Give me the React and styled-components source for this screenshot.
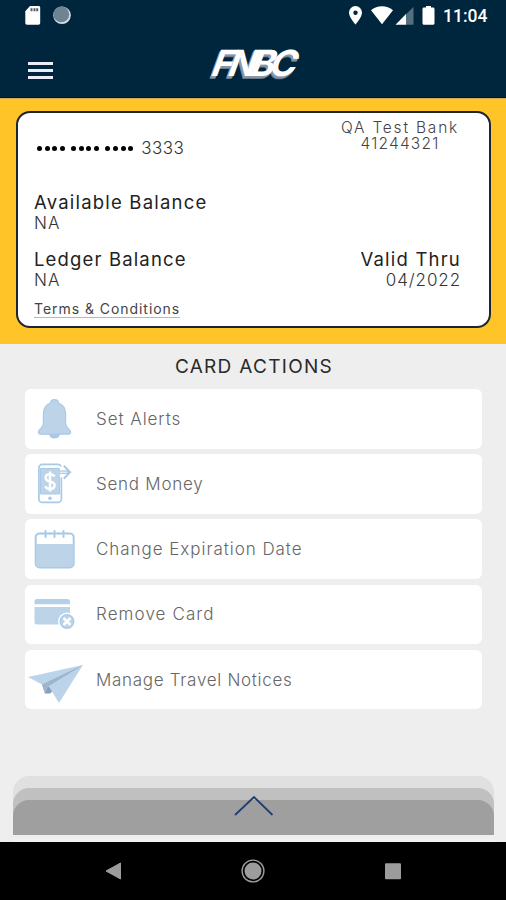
import React from 'react';
import styled, { createGlobalStyle } from 'styled-components';

const actions = [
  { label: 'Set Alerts', icon: 'bell', spacing: 0.95 },
  { label: 'Send Money', icon: 'phone', spacing: 0.75 },
  { label: 'Change Expiration Date', icon: 'calendar', spacing: 0.95 },
  { label: 'Remove Card', icon: 'card', spacing: 1.1 },
  { label: 'Manage Travel Notices', icon: 'plane', spacing: 0.7 },
];

const ActionIcon = ({ name }) => {
  switch (name) {
    case 'bell':
      return (
        <svg width="60" height="59" viewBox="0 0 60 59">
          <path fill="#a9c9e8" d="M24 45h11c-.5 3-2.500 4.500-5.500 4.500S24.500 48 24 45Z" />
          <path fill="#bcd3e8" stroke="#a9c9e8" strokeWidth="1.200" strokeLinejoin="round" d="M29.500 10.600c2.300 0 3.900 1.400 4 3.400 4.800 1.800 7.100 5.800 7.100 11v8.500c0 3.200 1 4.900 4 7.500 1.600 1.500 1.400 4.200-1 4.200H15.400c-2.400 0-2.600-2.700-1-4.200 3-2.600 4-4.300 4-7.500V25c0-5.200 2.300-9.200 7.100-11 .1-2 1.700-3.400 4-3.400Z" />
        </svg>
      );
    case 'phone':
      return (
        <svg width="60" height="59" viewBox="0 0 60 59">
          <rect x="13.900" y="10.400" width="22.500" height="38" rx="3.500" fill="#fff" stroke="#a9c9e8" strokeWidth="1.700" />
          <path fill="#bcd3e8" stroke="#a9c9e8" d="M15.500 14.500h19v25.500h-19z" />
          <circle cx="25" cy="44.200" r="1.800" fill="#a9c9e8" />
          <path fill="none" stroke="#fff" strokeWidth="2.500" d="M29.500 22.500c-.8-1.500-2.600-2.300-4.500-2.300-2.700 0-4.400 1.500-4.400 3.500 0 5.200 9 2.400 9 7.600 0 2.300-1.900 3.700-4.600 3.700-2.300 0-4-.9-4.800-2.700M25 17.500v20" />
          <path fill="#fff" d="M34.800 12.500h4v11h-4z" />
          <path fill="none" stroke="#a9c9e8" strokeWidth="3.600" d="M35 18.200h8.500" />
          <path fill="none" stroke="#a9c9e8" strokeWidth="2" d="m38.800 11.700 6.300 6.500-6.300 6.500" />
          <path stroke="#fff" strokeWidth="1" d="M35 18.200h7" />
        </svg>
      );
    case 'calendar':
      return (
        <svg width="60" height="59" viewBox="0 0 60 59">
          <rect x="10.700" y="13.400" width="38" height="34" rx="4" fill="#fff" stroke="#a9c9e8" strokeWidth="2" />
          <path fill="#bcd3e8" d="M11 24h37.500v19.500a3.500 3.500 0 0 1-3.500 3.500H14.500a3.500 3.500 0 0 1-3.500-3.500z" />
          <path stroke="#fff" strokeWidth="6" d="M20.500 11v6M29.500 11v6M38.500 11v6" />
          <path stroke="#a9c9e8" strokeWidth="2" strokeLinecap="round" d="M20.500 11v6M29.500 11v6M38.500 11v6M17 13.400h7M26 13.400h7M35 13.400h7" />
        </svg>
      );
    case 'card':
      return (
        <svg width="60" height="59" viewBox="0 0 60 59">
          <path fill="#b4d0e9" d="M12 14h30.500a2.500 2.500 0 0 1 2.500 2.500v2.800H9.500v-2.800A2.500 2.500 0 0 1 12 14Z" />
          <path fill="#bcd3e8" d="M9.500 22H45v14.900a2.500 2.500 0 0 1-2.500 2.500H12a2.500 2.500 0 0 1-2.500-2.500z" />
          <circle cx="42" cy="36.500" r="9" fill="#fff" />
          <circle cx="42" cy="36.500" r="6.800" fill="#bcd3e8" stroke="#a9c9e8" strokeWidth="1.300" />
          <path stroke="#fff" strokeWidth="2.600" d="m38.500 33 7 7m0-7-7 7" />
        </svg>
      );
    default:
      return (
        <svg width="60" height="59" viewBox="0 0 60 59">
          <path fill="#bcd4e9" d="M3 27 57.800 15 17 34.500Z" />
          <path fill="#9db6cd" d="M17 34.500 57.800 15 30.500 39 20 43.500Z" />
          <path fill="#859fb8" d="m20 43.500 3-7 5.500 4-3.500 3Z" />
          <path fill="#bcd4e9" d="M57.800 15 34 53 23.500 36Z" />
          <path fill="#9db6cd" d="M17 34.500 57.800 15 23.500 36 20 43.500Z" />
        </svg>
      );
  }
};

const App = () => (
  <>
    <GlobalStyle />
    <Screen>
      <Header>
        <StatusBar>
          <svg width="80" height="32" viewBox="0 0 80 32">
            <path fill="#fff" d="M30 6h8.500c1 0 1.700.7 1.700 1.700v15.400c0 1-.7 1.700-1.700 1.700H27c-1 0-1.700-.7-1.700-1.700V11.200Z" />
            <path stroke="#555f6b" strokeWidth="2" d="M31.500 8.200v3M34.500 8.200v3M37.200 8.200v3" />
            <circle cx="62" cy="15.300" r="8.800" fill="#d5dee4" />
            <circle cx="61.300" cy="14.400" r="7.900" fill="#6f8492" />
          </svg>
          <StatusRight>
            <svg width="96" height="32" viewBox="345 0 96 32">
              <path fill="#fff" fillRule="evenodd" d="M355.500 6a6.500 6.500 0 0 0-6.500 6.500c0 4.800 6.500 12 6.500 12s6.500-7.200 6.500-12a6.500 6.500 0 0 0-6.500-6.500Zm0 4.500a2.200 2.200 0 1 1 0 4.400 2.200 2.200 0 0 1 0-4.400Z" />
              <path fill="#fff" d="M371 10.200a17.500 17.500 0 0 1 22 0L382 24.300Z" />
              <path fill="#fff" d="M395.500 24.800 406 14v10.800Z" />
              <path fill="#536f80" d="M406 14.200 413.500 7v17.800H406Z" />
              <path fill="#fff" d="M426 6h5v1.500h2c.8 0 1.500.7 1.500 1.500v14.300c0 .8-.7 1.500-1.500 1.500h-9c-.8 0-1.500-.7-1.500-1.500V9c0-.8.7-1.500 1.500-1.500h2Z" />
            </svg>
            <Clock>11:04</Clock>
          </StatusRight>
        </StatusBar>
        <TitleBar>
          <MenuButton aria-label="Menu">
            <span />
            <span />
            <span />
          </MenuButton>
          <Logo>FNBC</Logo>
          <div />
        </TitleBar>
      </Header>

      <CardBand>
        <Card>
          <CardTop>
            <CardNumber>
              {[0, 1, 2].map((group) => (
                <DotGroup key={group}>
                  <i />
                  <i />
                  <i />
                  <i />
                </DotGroup>
              ))}
              <Value $spacing={0.5}>3333</Value>
            </CardNumber>
            <Bank>
              <BankLine $spacing={1.8}>QA Test Bank</BankLine>
              <BankLine $spacing={1.2}>41244321</BankLine>
            </Bank>
          </CardTop>
          <Balance>
            <Label $spacing={1.2}>Available Balance</Label>
            <Value>NA</Value>
          </Balance>
          <CardRow>
            <Balance>
              <Label $spacing={1.15}>Ledger Balance</Label>
              <Value>NA</Value>
            </Balance>
            <Balance $end>
              <Label $spacing={1.2}>Valid Thru</Label>
              <Value $spacing={0.9}>04/2022</Value>
            </Balance>
          </CardRow>
          <Terms>Terms &amp; Conditions</Terms>
        </Card>
      </CardBand>

      <Main>
        <Heading>CARD ACTIONS</Heading>
        <ActionList>
          {actions.map(({ label, icon, spacing }) => (
            <Action key={label}>
              <ActionIcon name={icon} />
              <ActionLabel $spacing={spacing}>{label}</ActionLabel>
            </Action>
          ))}
        </ActionList>
      </Main>

      <Drawer>
        <DrawerMiddle>
          <DrawerFront>
            <svg width="42" height="24" viewBox="0 0 42 24">
              <path fill="none" stroke="#1d3e70" strokeWidth="1.800" d="M2 21 21 3l18.500 18" />
            </svg>
          </DrawerFront>
        </DrawerMiddle>
      </Drawer>

      <NavBar>
        <svg width="20" height="20" viewBox="0 0 20 20">
          <path fill="#9c9c9c" stroke="#9c9c9c" strokeLinejoin="round" d="M3 10 17.500 2v16Z" />
        </svg>
        <svg width="26" height="26" viewBox="0 0 26 26">
          <circle cx="13" cy="13" r="10.900" fill="none" stroke="#9c9c9c" strokeWidth="1.400" />
          <circle cx="13" cy="13" r="8.500" fill="#9c9c9c" />
        </svg>
        <svg width="20" height="20" viewBox="0 0 20 20">
          <rect x="2" y="2.300" width="16" height="16" rx="1" fill="#9c9c9c" />
        </svg>
      </NavBar>
    </Screen>
  </>
);

const GlobalStyle = createGlobalStyle`
  * {
    box-sizing: border-box;
  }

  body {
    margin: 0;
    background: #eee;
    font-family: Inter, "Liberation Sans", sans-serif;
  }
`;

const Screen = styled.div`
  display: flex;
  flex-direction: column;
  width: 506px;
  height: 900px;
  overflow: hidden;
  background: #eee;
`;

const Header = styled.header`
  height: 98px;
  background: #00263e;
  border-bottom: 1px solid #001334;
`;

const StatusBar = styled.div`
  display: flex;
  justify-content: space-between;
  height: 32px;
  padding-right: 18px;
`;

const StatusRight = styled.div`
  display: flex;
  align-items: center;
`;

const Clock = styled.span`
  width: 47px;
  padding-left: 2px;
  color: #fff;
  font: 500 17.5px/32px Roboto, sans-serif;
`;

const TitleBar = styled.div`
  display: grid;
  grid-template-columns: 180px 146px 180px;
  align-items: center;
  height: 65px;
`;

const MenuButton = styled.button`
  display: flex;
  flex-direction: column;
  gap: 4px;
  width: 25px;
  margin: 12px 0 0 28px;
  padding: 0;
  border: 0;
  background: none;

  span {
    width: 25px;
    height: 3px;
    background: #efeafa;
  }
`;

const Logo = styled.div`
  margin-top: -3px;
  padding-left: 2px;
  color: #fff;
  font-size: 36px;
  font-weight: 700;
  line-height: 38px;
  letter-spacing: -4.8px;
  text-align: center;
  text-shadow: -1px 1px 0 #8b96a3, -1px 2px 0 #8b96a3, -1px 3px 0 #66788a;
  transform: skewX(-20deg);
`;

const CardBand = styled.section`
  height: 245.500px;
  padding: 12px 15px 0 16px;
  background: #ffc528;
  border-top: 1px solid #d8a64a;
`;

const Card = styled.div`
  height: 217px;
  padding: 7px 28px 0 16px;
  border: 2px solid #1d2432;
  border-radius: 14px;
  background: #fff;
`;

const CardTop = styled.div`
  display: flex;
  justify-content: space-between;
  height: 71px;
`;

const CardNumber = styled.div`
  display: flex;
  align-items: center;
  height: 56px;
  padding-left: 3px;
`;

const DotGroup = styled.span`
  display: flex;
  gap: 2.700px;
  margin-right: 6px;

  i {
    width: 5px;
    height: 5px;
    border-radius: 50%;
    background: #000;
  }

  &:nth-child(3) {
    margin-right: 8px;
  }
`;

const Bank = styled.div`
  width: 122px;
  text-align: center;
`;

const BankLine = styled.div`
  height: 15.500px;
  color: #444;
  font-size: 15.500px;
  font-weight: 300;
  line-height: 15.500px;
  letter-spacing: ${({ $spacing }) => $spacing}px;
  white-space: nowrap;
`;

const CardRow = styled.div`
  display: flex;
  justify-content: space-between;
`;

const Balance = styled.div`
  display: flex;
  flex-direction: column;
  align-items: ${({ $end }) => ($end ? 'flex-end' : 'flex-start')};
  height: 56.500px;
`;

const Label = styled.span`
  color: #222;
  font-size: 18.5px;
  font-weight: 400;
  line-height: 22px;
  letter-spacing: ${({ $spacing }) => $spacing}px;
`;

const Value = styled.span`
  color: #333;
  font-size: 17px;
  font-weight: 300;
  line-height: 20px;
  letter-spacing: ${({ $spacing = 1 }) => $spacing}px;
`;

const Terms = styled.a`
  display: block;
  width: fit-content;
  margin-top: -3.500px;
  border-bottom: 1px solid #b9b9b9;
  color: #444;
  font-size: 14px;
  font-weight: 400;
  line-height: 16px;
  letter-spacing: 0.95px;
`;

const Main = styled.main`
  flex: 1;
`;

const Heading = styled.h1`
  margin: 0;
  padding: 11px 0 0 2px;
  color: #2a2a2a;
  font-size: 19px;
  font-weight: 400;
  line-height: 24px;
  letter-spacing: 1.3px;
  text-align: center;
`;

const ActionList = styled.div`
  display: flex;
  flex-direction: column;
  gap: 5.700px;
  padding: 10.500px 24px 0 25px;
`;

const Action = styled.div`
  display: flex;
  align-items: center;
  height: 59.500px;
  border-radius: 6px;
  background: #fff;
`;

const ActionLabel = styled.span`
  padding-left: 11px;
  color: #666;
  font-size: 17px;
  font-weight: 300;
  letter-spacing: ${({ $spacing }) => $spacing}px;
`;

const Drawer = styled.div`
  height: 66px;
  margin: 0 12px 0 13px;
  padding-top: 12px;
  border-radius: 16px 16px 0 0;
  background: linear-gradient(#e0e0e0 59px, #eee 59px, #f2f2f2);
`;

const DrawerMiddle = styled.div`
  height: 47px;
  padding-top: 12px;
  border-radius: 16px 16px 0 0;
  background: #c0c0c0;
`;

const DrawerFront = styled.div`
  display: flex;
  justify-content: center;
  height: 35px;
  border-radius: 16px 16px 0 0;
  background: #9f9f9f;

  svg {
    margin-top: -6px;
  }
`;

const NavBar = styled.nav`
  display: flex;
  align-items: center;
  justify-content: space-between;
  height: 58px;
  padding: 0 103px;
  background: #000;
`;

export default App;
